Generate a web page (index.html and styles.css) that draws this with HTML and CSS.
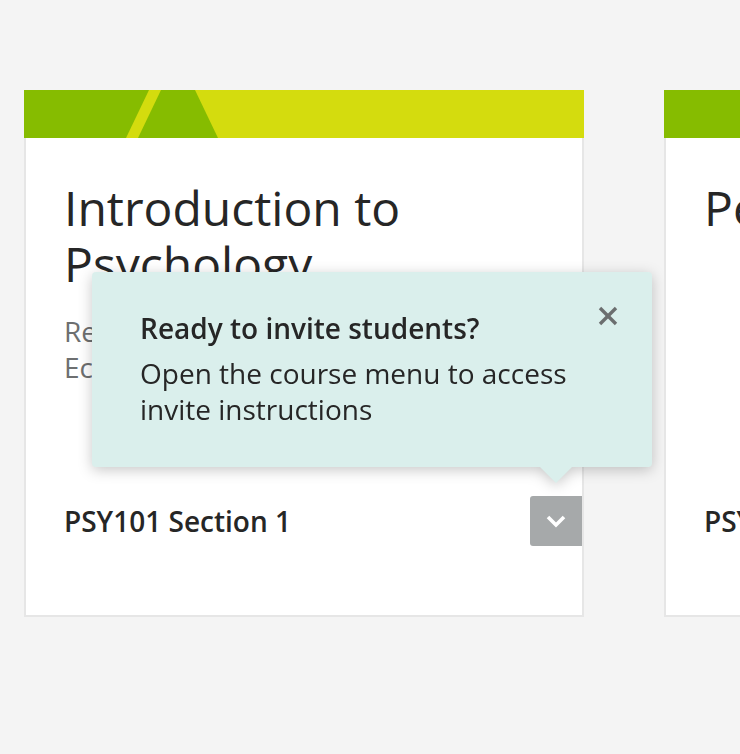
FILE: index.html
```html
<!DOCTYPE html>
<html lang="en">
<head>
<meta charset="utf-8">
<title>Courses</title>
<link rel="stylesheet" href="styles.css">
</head>
<body>
<main class="course-list">
  <article class="course-card">
    <div class="card-header">
      <svg class="header-art" viewBox="0 0 560 48" preserveAspectRatio="none" aria-hidden="true">
        <rect x="0" y="0" width="560" height="48" fill="#d4dc0e"/>
        <polygon points="0,0 125,0 102,48 0,48" fill="#86bc00"/>
        <polygon points="137,0 171,0 194,48 114,48" fill="#86bc00"/>
      </svg>
    </div>
    <div class="card-body">
      <h2 class="course-title">Introduction to Psychology</h2>
      <div class="course-meta">
        <div>Rebecca Thompson</div>
        <div>Eckerd College</div>
      </div>
      <div class="card-footer">
        <span class="section-name">PSY101 Section 1</span>
        <button class="menu-btn" aria-label="Course menu">
          <svg width="22" height="14" viewBox="0 0 22 14" aria-hidden="true">
            <polyline points="3,3 11,11 19,3" fill="none" stroke="#ffffff" stroke-width="3.6"/>
          </svg>
        </button>
      </div>
    </div>

    <div class="popover" role="dialog">
      <button class="popover-close" aria-label="Close">
        <svg width="22" height="22" viewBox="0 0 22 22" aria-hidden="true">
          <line x1="3" y1="3" x2="19" y2="19" stroke="#6b6e6f" stroke-width="3.4"/>
          <line x1="19" y1="3" x2="3" y2="19" stroke="#6b6e6f" stroke-width="3.4"/>
        </svg>
      </button>
      <h3 class="popover-title">Ready to invite students?</h3>
      <p class="popover-text">Open the course menu to access invite instructions</p>
      <span class="popover-arrow"></span>
    </div>
  </article>

  <article class="course-card">
    <div class="card-header">
      <svg class="header-art" viewBox="0 0 560 48" preserveAspectRatio="none" aria-hidden="true">
        <rect x="0" y="0" width="560" height="48" fill="#d4dc0e"/>
        <polygon points="0,0 125,0 102,48 0,48" fill="#86bc00"/>
        <polygon points="137,0 171,0 194,48 114,48" fill="#86bc00"/>
      </svg>
    </div>
    <div class="card-body">
      <h2 class="course-title">Personality</h2>
      <div class="card-footer">
        <span class="section-name">PSY220 Section 2</span>
        <button class="menu-btn" aria-label="Course menu">
          <svg width="22" height="14" viewBox="0 0 22 14" aria-hidden="true">
            <polyline points="3,3 11,11 19,3" fill="none" stroke="#ffffff" stroke-width="3.6"/>
          </svg>
        </button>
      </div>
    </div>
  </article>
</main>
</body>
</html>
```

FILE: styles.css
```css
html, body {
  margin: 0;
  padding: 0;
}

body {
  background: #f4f4f4;
  font-family: "Open Sans", "Noto Sans", "Liberation Sans", sans-serif;
  color: #262626;
  overflow: hidden;
  width: 740px;
  height: 754px;
}

.course-list {
  display: flex;
  gap: 80px;
  padding: 90px 0 0 24px;
}

.course-card {
  position: relative;
  flex: 0 0 560px;
  width: 560px;
  display: flex;
  flex-direction: column;
}

.card-header {
  height: 48px;
}

.header-art {
  display: block;
  width: 560px;
  height: 48px;
}

.card-body {
  background: #ffffff;
  border: 2px solid #e6e6e6;
  border-top: none;
  height: 479px;
  box-sizing: border-box;
  padding: 42px 38px 0 38px;
  display: flex;
  flex-direction: column;
}

.course-title {
  margin: 0;
  font-size: 48px;
  line-height: 56px;
  font-weight: 400;
  color: #262626;
}

.course-meta {
  margin-top: 21px;
  font-size: 28px;
  line-height: 36px;
  color: #6d6f70;
}

.card-footer {
  margin-top: auto;
  margin-bottom: 69px;
  margin-right: -38px;
  display: flex;
  align-items: center;
  justify-content: space-between;
}

.section-name {
  font-size: 28px;
  line-height: 36px;
  font-weight: 600;
  color: #262626;
}

.menu-btn {
  width: 52px;
  height: 50px;
  border: none;
  padding: 0;
  margin: 0;
  background: #a6a9aa;
  border-radius: 3px 0 0 3px;
  display: flex;
  align-items: center;
  justify-content: center;
}

.menu-btn svg {
  display: block;
}

.popover {
  position: absolute;
  left: 68px;
  top: 182px;
  width: 560px;
  height: 195px;
  box-sizing: border-box;
  padding: 38px 70px 0 48px;
  background: #daefec;
  border-radius: 4px;
  filter: drop-shadow(0 3px 7px rgba(0, 0, 0, 0.22));
}

.popover-title {
  margin: 0;
  font-size: 28px;
  line-height: 36px;
  font-weight: 600;
  color: #262626;
}

.popover-text {
  margin: 9px 0 0 0;
  font-size: 28px;
  line-height: 36px;
  font-weight: 400;
  color: #262626;
}

.popover-close {
  position: absolute;
  right: 33px;
  top: 33px;
  width: 22px;
  height: 22px;
  padding: 0;
  border: none;
  background: transparent;
}

.popover-close svg {
  display: block;
}

.popover-arrow {
  position: absolute;
  left: 448px;
  bottom: -16px;
  width: 32px;
  height: 16px;
  background: #daefec;
  clip-path: polygon(0 0, 100% 0, 50% 100%);
}
```
